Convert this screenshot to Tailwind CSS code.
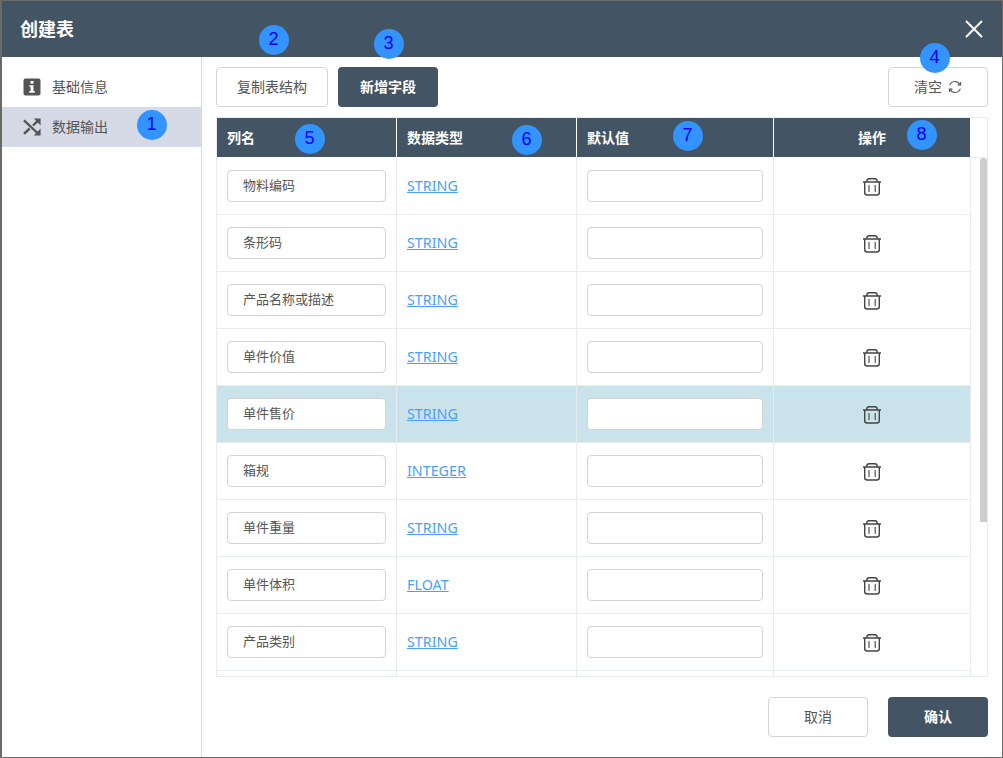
<!DOCTYPE html>
<html lang="zh-CN">
<head>
    <meta charset="UTF-8">
    <title>创建表</title>
    <script src="https://cdn.jsdelivr.net/npm/@tailwindcss/browser@4"></script>
</head>
<body class="bg-[#6a6a6a] h-[758px] overflow-hidden font-['Noto_Sans','Noto_Sans_CJK_SC',sans-serif] text-[14px] text-[#555]">
    <div class="relative ml-[2px] mt-[1px] w-[1000px] h-[756px] bg-white flex flex-col">
        <!-- Header -->
        <div class="h-[56px] shrink-0 bg-[#435465] flex items-center justify-between pl-[18px] pr-[19px]">
            <h1 class="text-[18px] font-bold text-white">创建表</h1>
            <svg class="w-[18px] h-[18px]" viewBox="0 0 18 18" fill="none" stroke="white" stroke-width="2"><path d="M1 1l16 16M17 1L1 17"/></svg>
        </div>

        <div class="flex-1 flex min-h-0">
            <!-- Sidebar -->
            <div class="w-[200px] shrink-0 border-r border-[#d6dae6] pt-[10px]">
                <div class="h-[40px] flex items-center pl-[21px] gap-[11px]">
                    <svg class="w-[18px] h-[18px]" viewBox="0 0 18 18"><rect x="0.500" y="0.500" width="17" height="17" rx="2" fill="#555"/><rect x="7.500" y="3" width="3" height="2.600" fill="#fff"/><path d="M6.500 7.300h4v5.700h1.200v1.800H6.300V13h1.300V9.100H6.500z" fill="#fff"/></svg>
                    <span class="pb-[2px]">基础信息</span>
                </div>
                <div class="h-[40px] flex items-center pl-[21px] gap-[11px] bg-[#d6dae6]">
                    <svg class="w-[18px] h-[18px]" viewBox="0 0 18 18" fill="none" stroke="#555" stroke-width="2.400"><path d="M1 2.300L15 15.500M1 15.800L6.700 10.500M10 7.500L15 2.600"/><path d="M10.800 .6H17.600V7.400zM17.600 10.600V17.400H10.800z" fill="#555" stroke="none"/></svg>
                    <span class="pb-[2px]">数据输出</span>
                </div>
            </div>

            <!-- Main -->
            <div class="flex-1 min-w-0 pl-[14px] pr-[14px] pt-[10px] flex flex-col">
                <div class="flex gap-[10px] h-[40px] shrink-0">
                    <button class="w-[112px] h-[40px] pb-[2px] border border-[#d4d4d4] rounded-[4px] bg-white text-[#555]">复制表结构</button>
                    <button class="w-[100px] h-[40px] pb-[2px] rounded-[4px] bg-[#435465] text-white font-bold">新增字段</button>
                    <button class="ml-auto w-[100px] h-[40px] pb-[2px] border border-[#d4d4d4] rounded-[4px] bg-white text-[#555] flex items-center justify-center gap-[6px]">
                        清空
                        <svg class="w-[14px] h-[14px] mt-[2px]" viewBox="0 0 14 14" fill="none" stroke="#555" stroke-width="1.100"><path d="M1.700 5.400A5.500 5.500 0 0 1 11.800 4.400M12.300 8.600A5.500 5.500 0 0 1 2.200 9.600"/><path d="M12.600 1.900v3H9.600M1.400 12.100V9.100h3"/></svg>
                    </button>
                </div>

                <!-- Table -->
                <div class="relative mt-[10px] w-[772px] h-[560px] border border-[#e9ebf3] overflow-hidden">
                    <div class="flex h-[39px] text-white font-bold">
                        <div class="w-[180px] bg-[#435465] border-r border-white flex items-center pl-[10px]">列名</div>
                        <div class="w-[180px] bg-[#435465] border-r border-white flex items-center pl-[10px]">数据类型</div>
                        <div class="w-[197px] bg-[#435465] border-r border-white flex items-center pl-[10px]">默认值</div>
                        <div class="w-[196px] bg-[#435465] flex items-center justify-center">操作</div>
                    </div>
                    <div id="rows" class="w-[754px] pt-px border-r border-[#e9ebf3]"></div>
                    <div class="absolute left-[753px] top-[39px] w-[18px] h-px bg-[#e9ebf3]"></div>
                    <div class="absolute left-[763px] top-[40px] w-[7px] h-[364px] bg-[#cdcdcd] rounded-t-[3px]"></div>
                </div>

                <!-- Footer -->
                <div class="flex justify-end gap-[20px] mt-[20px]">
                    <button class="w-[100px] h-[40px] pb-[2px] border border-[#d4d4d4] rounded-[4px] bg-white text-[#555]">取消</button>
                    <button class="w-[100px] h-[40px] pb-[2px] rounded-[4px] bg-[#435465] text-white font-bold">确认</button>
                </div>
            </div>
        </div>

        <!-- Numbered markers -->
        <div class="absolute left-[134.500px] top-[108.500px] w-[30px] h-[30px] rounded-full bg-[#3393ff] text-[#0000ff] text-[18px] font-['Liberation_Sans'] flex items-center justify-center">1</div>
        <div class="absolute left-[256.500px] top-[23.500px] w-[30px] h-[30px] rounded-full bg-[#3393ff] text-[#0000ff] text-[18px] font-['Liberation_Sans'] flex items-center justify-center">2</div>
        <div class="absolute left-[371.500px] top-[27.500px] w-[30px] h-[30px] rounded-full bg-[#3393ff] text-[#0000ff] text-[18px] font-['Liberation_Sans'] flex items-center justify-center">3</div>
        <div class="absolute left-[917.500px] top-[41.500px] w-[30px] h-[30px] rounded-full bg-[#3393ff] text-[#0000ff] text-[18px] font-['Liberation_Sans'] flex items-center justify-center">4</div>
        <div class="absolute left-[292.500px] top-[122.500px] w-[30px] h-[30px] rounded-full bg-[#3393ff] text-[#0000ff] text-[18px] font-['Liberation_Sans'] flex items-center justify-center">5</div>
        <div class="absolute left-[509.500px] top-[123.500px] w-[30px] h-[30px] rounded-full bg-[#3393ff] text-[#0000ff] text-[18px] font-['Liberation_Sans'] flex items-center justify-center">6</div>
        <div class="absolute left-[670.500px] top-[119.500px] w-[30px] h-[30px] rounded-full bg-[#3393ff] text-[#0000ff] text-[18px] font-['Liberation_Sans'] flex items-center justify-center">7</div>
        <div class="absolute left-[904.500px] top-[118.500px] w-[30px] h-[30px] rounded-full bg-[#3393ff] text-[#0000ff] text-[18px] font-['Liberation_Sans'] flex items-center justify-center">8</div>
    </div>

    <script>
        const fields = [
            ['物料编码', 'STRING'], ['条形码', 'STRING'], ['产品名称或描述', 'STRING'],
            ['单件价值', 'STRING'], ['单件售价', 'STRING'], ['箱规', 'INTEGER'],
            ['单件重量', 'STRING'], ['单件体积', 'FLOAT'], ['产品类别', 'STRING']
        ];
        const trash = `<svg class="w-[18px] h-[18px] mt-[2px]" viewBox="0 0 18 18" fill="none" stroke="#444" stroke-width="1.400"><path d="M0 4h18M3.700 3.500Q4 .8 6 .8h6q2 0 2.300 2.700"/><path d="M1.700 4v10.500q0 2.500 2.500 2.500h9.600q2.500 0 2.500-2.500V4"/><path d="M6 7v7M12.200 7v7" stroke-width="1.100"/></svg>`;
        const rows = document.getElementById('rows');
        fields.forEach(([name, type], i) => {
            const bg = i === 4 ? 'bg-[#cae3ea]' : 'bg-white';
            rows.insertAdjacentHTML('beforeend', `
                <div class="flex h-[57px] border-b border-[#e9ebf3] ${bg}">
                    <div class="w-[180px] border-r border-[#e9ebf3] pl-[10px] pt-[12px]">
                        <div class="w-[159px] h-[32px] border border-[#d4d4d4] rounded-[4px] bg-white pl-[15px] flex items-center text-[13px] text-[#555]">${name}</div>
                    </div>
                    <div class="w-[180px] border-r border-[#e9ebf3] pl-[10px] flex items-center">
                        <a class="text-[14.300px] text-[#4a9ffb] underline">${type}</a>
                    </div>
                    <div class="w-[197px] border-r border-[#e9ebf3] pl-[10px] pt-[12px]">
                        <input class="block w-[176px] h-[32px] border border-[#d4d4d4] rounded-[4px] bg-white">
                    </div>
                    <div class="w-[196px] flex items-center justify-center">${trash}</div>
                </div>`);
        });
        // the next row is cut off by the bottom of the scroll area
        rows.insertAdjacentHTML('beforeend', `
            <div class="flex h-[57px]">
                <div class="w-[180px] border-r border-[#e9ebf3]"></div>
                <div class="w-[180px] border-r border-[#e9ebf3]"></div>
                <div class="w-[197px] border-r border-[#e9ebf3]"></div>
            </div>`);
    </script>
</body>
</html>
